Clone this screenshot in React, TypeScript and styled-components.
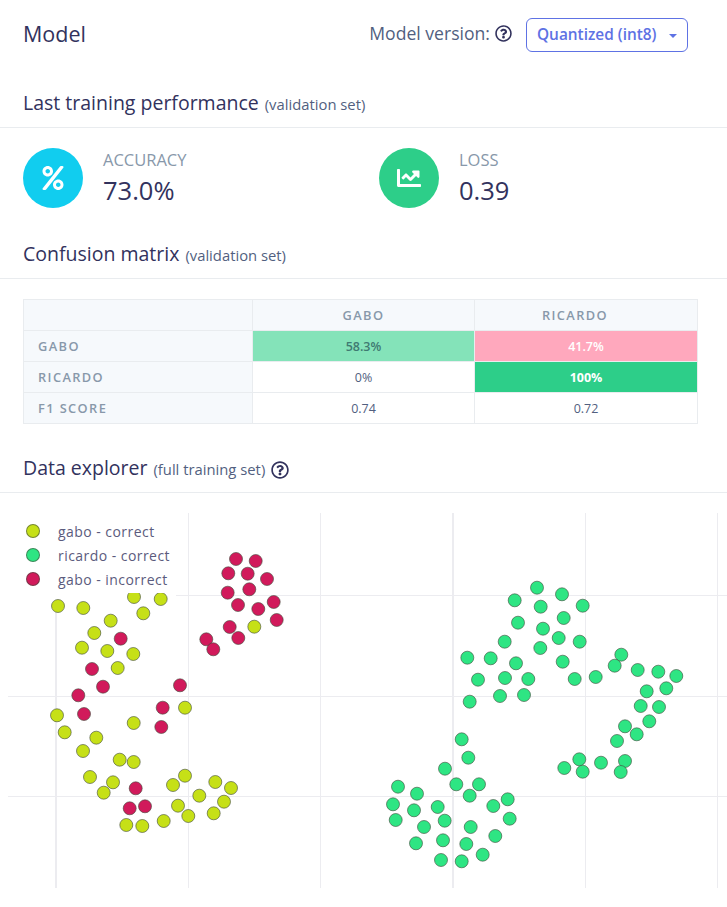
import styled, { createGlobalStyle } from 'styled-components';
import { FaChartLine, FaPercent, FaRegQuestionCircle } from 'react-icons/fa';

const GlobalStyle = createGlobalStyle`
  html, body {
    margin: 0;
    padding: 0;
    background: #fff;
  }
  body {
    font-family: "Open Sans", "Liberation Sans", sans-serif;
    color: #32325d;
  }
`;

type Point = [number, number];

const gaboCorrect: Point[] = [
  [58, 606], [83.3, 608], [110.7, 620.7], [94.3, 633], [82, 647.7], [107.3, 651],
  [133.3, 654], [117.7, 668], [143.3, 613.3], [134, 597], [160.7, 599], [254.3, 626.7],
  [185, 707.7], [57, 715.3], [133.7, 723], [64.7, 732.3], [96.3, 737.7], [83, 751],
  [119.7, 759.7], [133.7, 762], [90, 777], [113, 782.3], [103.7, 792.7], [185, 775.7],
  [173, 785], [199.3, 795.7], [215.3, 782], [231, 788], [224, 801.7], [178, 805.7],
  [188.3, 816], [213.7, 813.3], [163.7, 821], [126.3, 825], [142.3, 826],
];

const gaboIncorrect: Point[] = [
  [236, 559], [255.7, 561], [228.3, 573.3], [247.7, 573.7], [267, 579], [227.7, 592.7],
  [249.3, 589.3], [238, 605], [258.3, 609], [273.7, 602], [276.7, 620], [229.7, 627],
  [238.3, 638], [206.3, 639.3], [213.3, 649.3], [120.7, 638.7], [92, 669], [103, 686.7],
  [78.3, 695.3], [180, 685.3], [84, 714], [162.7, 707.7], [161.3, 727], [135.7, 788.3],
  [129.7, 808.3], [145, 806.3],
];

const ricardoCorrect: Point[] = [
  [537, 587.7], [562, 594.3], [514.7, 600.3], [540.7, 606.7], [582.7, 605.7], [563.7, 618],
  [518, 622.7], [543, 628.7], [558.7, 638], [579.7, 641.7], [504.7, 641.7], [540.3, 648],
  [467.3, 657.7], [490.7, 658.3], [516, 663.3], [562.7, 661.7], [621.3, 654.7], [614.7, 665.7],
  [637.7, 670], [658.3, 671.7], [676.3, 676], [478, 679.7], [505, 678], [528.3, 679],
  [574.7, 679], [595.7, 677], [666.3, 688.3], [646.7, 691.3], [500, 696], [524, 695],
  [469.7, 701.7], [640.7, 706], [659, 707], [649.3, 721.3], [625, 726.3], [636.7, 734.3],
  [617, 741], [461.7, 739.3], [468.3, 757.7], [445, 768.7], [579.3, 759.3], [564.3, 768],
  [582.7, 771.7], [601, 762.7], [625, 761], [620.7, 772], [398, 786.7], [417, 793.7],
  [456.3, 784.3], [479, 784.3], [469.7, 795.7], [507.7, 799.3], [493.3, 806], [393, 804.3],
  [414, 810.3], [437.7, 807], [444.7, 820.7], [395.7, 820], [424, 827], [509.7, 818.7],
  [470.7, 827], [495.3, 836], [416, 843.3], [443, 840.3], [466.3, 844], [482.7, 854.7],
  [441, 860], [461.7, 861.3],
];

const series = [
  { label: 'gabo - correct', color: '#c6e017', points: gaboCorrect },
  { label: 'ricardo - correct', color: '#2ee583', points: ricardoCorrect },
  { label: 'gabo - incorrect', color: '#d11a5b', points: gaboIncorrect },
];

// the legend box hides the start of the first grid lines
const verticalLines = [
  { x: 56, width: 2, from: 600 },
  { x: 188.5, width: 1, from: 513 },
  { x: 320.5, width: 1, from: 513 },
  { x: 453, width: 2, from: 513 },
  { x: 585.5, width: 1, from: 513 },
  { x: 717.5, width: 1, from: 513 },
];
const horizontalLines = [
  { y: 595.5, from: 176 },
  { y: 696.5, from: 8 },
  { y: 796.5, from: 8 },
];

const App = () => {
  return (
    <Page>
      <GlobalStyle />
      <TopBar>
        <PageTitle>Model</PageTitle>
        <VersionGroup>
          <VersionLabel>Model version:</VersionLabel>
          <HelpIcon size={17} />
          <VersionButton>
            Quantized (int8)
            <Caret />
          </VersionButton>
        </VersionGroup>
      </TopBar>

      <SectionHeader $top={26}>
        <SectionTitle>Last training performance</SectionTitle>
        <SectionNote>(validation set)</SectionNote>
      </SectionHeader>

      <Stats>
        <Stat>
          <StatCircle $color="#11cdef">
            <FaPercent size={24} />
          </StatCircle>
          <StatText>
            <StatLabel>ACCURACY</StatLabel>
            <StatValue>73.0%</StatValue>
          </StatText>
        </Stat>
        <Stat>
          <StatCircle $color="#2dce89">
            <FaChartLine size={24} />
          </StatCircle>
          <StatText>
            <StatLabel>LOSS</StatLabel>
            <StatValue>0.39</StatValue>
          </StatText>
        </Stat>
      </Stats>

      <SectionHeader $top={21}>
        <SectionTitle>Confusion matrix</SectionTitle>
        <SectionNote>(validation set)</SectionNote>
      </SectionHeader>

      <MatrixWrap>
        <Matrix>
          <colgroup>
            <col width={229} />
            <col width={222} />
            <col width={223} />
          </colgroup>
          <thead>
            <tr>
              <RowHead />
              <ColHead>GABO</ColHead>
              <ColHead $offset={22}>RICARDO</ColHead>
            </tr>
          </thead>
          <tbody>
            <tr>
              <RowHead>GABO</RowHead>
              <Cell $bg="#84e3b9" $fg="#3f7a72" $weight={600}>58.3%</Cell>
              <Cell $bg="#ffa8bd" $fg="#fff" $weight={600}>41.7%</Cell>
            </tr>
            <tr>
              <RowHead>RICARDO</RowHead>
              <Cell>0%</Cell>
              <Cell $bg="#2dce89" $fg="#fff" $weight={700}>100%</Cell>
            </tr>
            <tr>
              <RowHead>F1 SCORE</RowHead>
              <Cell>0.74</Cell>
              <Cell>0.72</Cell>
            </tr>
          </tbody>
        </Matrix>
      </MatrixWrap>

      <SectionHeader $top={19}>
        <SectionTitle>Data explorer</SectionTitle>
        <SectionNote>(full training set)</SectionNote>
        <SectionHelp size={18} />
      </SectionHeader>

      <ChartWrap>
        <svg width={727} height={375} viewBox="0 513 727 375">
          {verticalLines.map((l) => (
            <line key={l.x} x1={l.x} x2={l.x} y1={l.from} y2={888} stroke="#ececf0" strokeWidth={l.width} />
          ))}
          {horizontalLines.map((l) => (
            <line key={l.y} x1={l.from} x2={727} y1={l.y} y2={l.y} stroke="#ececf0" strokeWidth={1} />
          ))}
          {series.map((s) => (
            <g key={s.label} fill={s.color} stroke="#3f4a3a" strokeOpacity={0.6} strokeWidth={1}>
              {s.points.map(([x, y]) => (
                <circle key={`${x}-${y}`} cx={x} cy={y} r={6.5} />
              ))}
            </g>
          ))}
        </svg>
        <Legend>
          {series.map((s) => (
            <LegendRow key={s.label}>
              <LegendDot $color={s.color} />
              <LegendText>{s.label}</LegendText>
            </LegendRow>
          ))}
        </Legend>
      </ChartWrap>
    </Page>
  );
};

export default App;

const Page = styled.div`
  width: 727px;
  height: 907px;
  overflow: hidden;
  background: #fff;
`;

const TopBar = styled.div`
  display: flex;
  justify-content: space-between;
  align-items: center;
  padding: 17px 39px 0 23px;
  height: 35px;
`;

const PageTitle = styled.div`
  font-size: 21.5px;
  font-weight: 500;
  color: #32325d;
  position: relative;
  top: -1px;
`;

const VersionGroup = styled.div`
  display: flex;
  align-items: center;
`;

const VersionLabel = styled.span`
  font-size: 17.6px;
  color: #525f7f;
  margin-right: 5px;
  position: relative;
  top: -2px;
`;

const HelpIcon = styled(FaRegQuestionCircle)`
  color: #32325d;
  flex: none;
  margin-top: -3px;
`;

const SectionHelp = styled(HelpIcon)`
  align-self: center;
  margin-top: 0;
  margin-bottom: 7px;
`;

const VersionButton = styled.div`
  display: flex;
  align-items: center;
  justify-content: space-between;
  box-sizing: border-box;
  width: 162px;
  height: 34px;
  margin-left: 14px;
  padding: 0 10px;
  border: 1px solid #5e72e4;
  border-radius: 6px;
  font-size: 15.4px;
  font-weight: 600;
  color: #5e72e4;
`;

const Caret = styled.span`
  width: 0;
  height: 0;
  border-left: 4px solid transparent;
  border-right: 4px solid transparent;
  border-top: 4.5px solid #5e72e4;
  margin-top: 2px;
`;

const SectionHeader = styled.div<{ $top: number }>`
  display: flex;
  align-items: baseline;
  gap: 6px;
  box-sizing: border-box;
  height: 50px;
  margin-top: ${(p) => p.$top}px;
  padding: 11px 23px 0;
  border-bottom: 1px solid #e9ecef;
`;

const SectionTitle = styled.span`
  font-size: 19.5px;
  font-weight: 500;
  color: #32325d;
`;

const SectionNote = styled.span`
  font-size: 14.8px;
  color: #525f7f;
`;

const Stats = styled.div`
  display: grid;
  grid-template-columns: 356px 1fr;
  padding: 20px 23px 0;
`;

const Stat = styled.div`
  display: flex;
  align-items: center;
  gap: 20px;
`;

const StatCircle = styled.div<{ $color: string }>`
  display: flex;
  align-items: center;
  justify-content: center;
  width: 60px;
  height: 60px;
  border-radius: 50%;
  background: ${(p) => p.$color};
  color: #fff;
`;

const StatText = styled.div`
  display: flex;
  flex-direction: column;
`;

const StatLabel = styled.div`
  font-size: 16.5px;
  font-weight: 500;
  line-height: 24px;
  color: #8898aa;
`;

const StatValue = styled.div`
  font-size: 25.5px;
  font-weight: 500;
  line-height: 36px;
  color: #32325d;
`;

const MatrixWrap = styled.div`
  padding: 20px 29px 0 23px;
`;

const Matrix = styled.table`
  width: 674px;
  table-layout: fixed;
  border-collapse: collapse;
  border: 1px solid #e9ecef;
`;

const RowHead = styled.td`
  height: 30px;
  padding: 0 0 0 14px;
  background: #f6f9fc;
  border: 1px solid #e9ecef;
  font-size: 12.8px;
  font-weight: 600;
  letter-spacing: 1.4px;
  color: #8898aa;
`;

const ColHead = styled.td<{ $offset?: number }>`
  height: 30px;
  padding: 0 ${(p) => p.$offset ?? 0}px 0 0;
  background: #f6f9fc;
  border: 1px solid #e9ecef;
  text-align: center;
  font-size: 12.8px;
  font-weight: 600;
  letter-spacing: 1.4px;
  color: #8898aa;
`;

const Cell = styled.td<{ $bg?: string; $fg?: string; $weight?: number }>`
  height: 30px;
  padding: 0;
  border: 1px solid #e9ecef;
  text-align: center;
  font-size: 12.5px;
  font-weight: ${(p) => p.$weight ?? 400};
  background: ${(p) => p.$bg ?? '#fff'};
  color: ${(p) => p.$fg ?? '#525f7f'};
`;

const ChartWrap = styled.div`
  position: relative;
  margin-top: 20px;
  height: 375px;
  svg {
    display: block;
  }
`;

const Legend = styled.div`
  position: absolute;
  left: 17px;
  top: 0;
  width: 159px;
  height: 80px;
  box-sizing: border-box;
  padding-top: 6px;
  background: #fff;
`;

const LegendRow = styled.div`
  display: flex;
  align-items: center;
  height: 24px;
  padding-left: 9px;
`;

const LegendDot = styled.span<{ $color: string }>`
  box-sizing: border-box;
  width: 14px;
  height: 14px;
  border-radius: 50%;
  background: ${(p) => p.$color};
  border: 1px solid rgba(63, 74, 58, 0.6);
  margin-right: 18px;
`;

const LegendText = styled.span`
  font-size: 14px;
  letter-spacing: 0.45px;
  color: #5b5b7d;
`;
